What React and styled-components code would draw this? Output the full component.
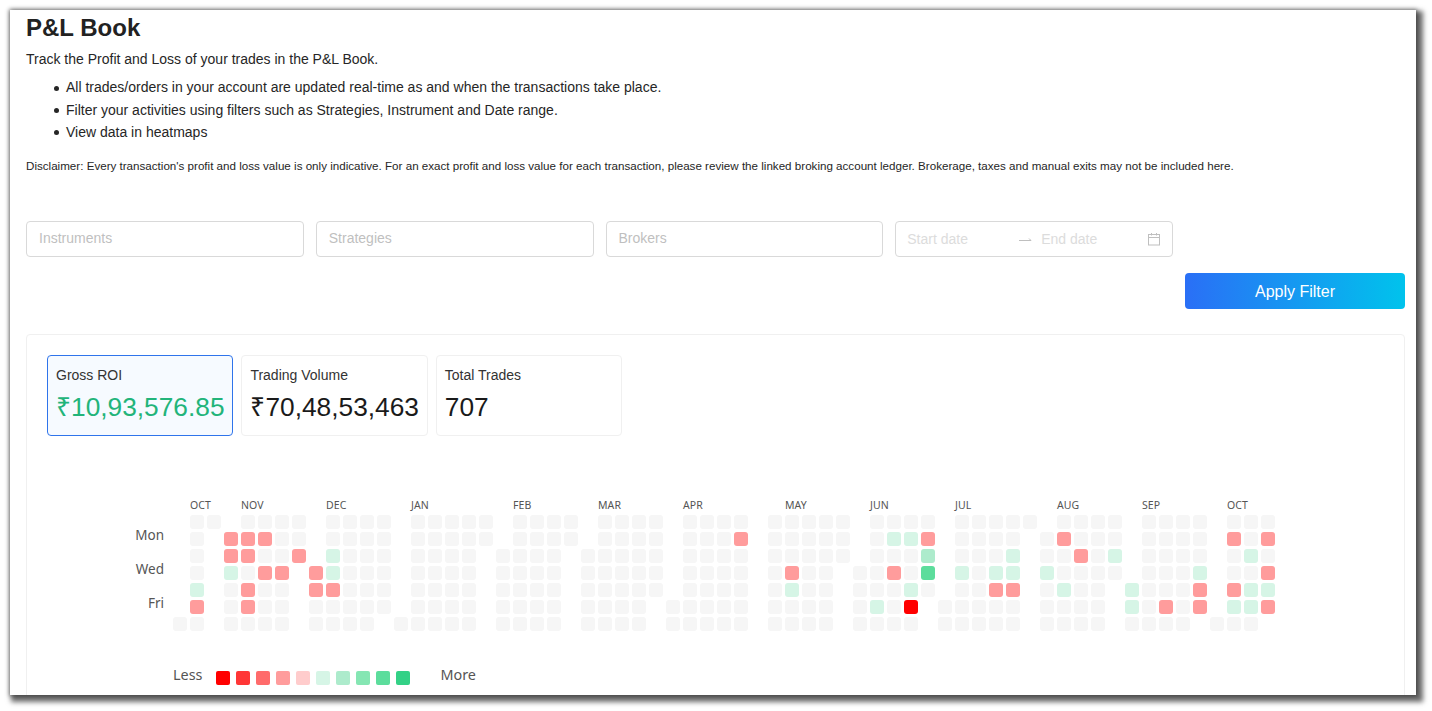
import React from "react";
import styled, { createGlobalStyle } from "styled-components";

const GlobalStyle = createGlobalStyle`
  html, body { margin: 0; padding: 0; background: #fff; height: 711px; overflow: hidden; }
  body { font-family: "Liberation Sans", Arial, sans-serif; }
  * { box-sizing: border-box; }
`;

const Stage = styled.div`
  height: 711px;
  padding: 10px 16px 16px 10px;
`;
const Frame = styled.main`
  height: 685px;
  background: #fff;
  padding: 0 11px 0 16px;
  overflow: hidden;
  box-shadow: 4px 4px 5px 3px rgba(0, 0, 0, 0.58), 0 0 4px 1px rgba(0, 0, 0, 0.4);
`;
const Title = styled.h1`
  margin: 0;
  font-size: 24px;
  line-height: 36px;
  font-weight: 700;
  color: #222;
`;
const Intro = styled.p`
  margin: 2px 0 0;
  font-size: 14px;
  line-height: 22px;
  color: #262626;
`;
const Bullets = styled.ul`
  margin: 6.3px 0 0;
  padding-left: 28px;
  list-style: none;
  font-size: 14px;
  line-height: 22.4px;
  color: #262626;
`;
const Bullet = styled.li`
  display: flex;
  align-items: center;
  &::before {
    content: "";
    flex: 0 0 5px;
    height: 5px;
    margin: 1px 7px 0 0;
    border-radius: 50%;
    background: #262626;
  }
`;
const Disclaimer = styled.p`
  margin: 13.7px 0 0;
  font-size: 11.62px;
  line-height: 18px;
  color: #262626;
`;
const Filters = styled.div`
  display: grid;
  grid-template-columns: repeat(4, 277.75px);
  column-gap: 12px;
  margin-top: 46px;
`;
const Field = styled.div`
  height: 36px;
  border: 1px solid #d9d9d9;
  border-radius: 4px;
  padding: 0 12px 2px;
  display: flex;
  align-items: center;
  font-size: 14px;
  color: #bfbfbf;
`;
const DateField = styled(Field)`
  padding: 0 11px 0 11px;
  color: #dcdcdc;
`;
const DateText = styled.span`
  flex: 0 0 ${(p) => p.$w}px;
`;
const IconSlot = styled.span`
  display: flex;
  color: ${(p) => p.$c || "#bfbfbf"};
  margin-left: ${(p) => p.$ml || 0}px;
  margin-right: ${(p) => p.$mr || 0}px;
`;
const Actions = styled.div`
  display: flex;
  justify-content: flex-end;
  margin-top: 16px;
`;
const ApplyButton = styled.button`
  width: 220px;
  height: 36px;
  border: 0;
  border-radius: 4px;
  padding: 2px 0 0;
  color: #fff;
  font: 16px "Liberation Sans", Arial, sans-serif;
  background: linear-gradient(90deg, #2a6ff6 0%, #00c3ec 100%);
`;
const Panel = styled.section`
  margin-top: 25px;
  height: 400px;
  border: 1px solid #f0f0f0;
  border-radius: 4px;
  padding: 20px;
`;
const Cards = styled.div`
  display: flex;
  gap: 8px;
`;
const Card = styled.div`
  width: 186.4px;
  height: 81px;
  padding: 10px 8px 0;
  border-radius: 4px;
  border: 1px solid ${(p) => (p.$active ? "#2f74eb" : "#f0f0f0")};
  background: ${(p) => (p.$active ? "#f6faff" : "#fff")};
  white-space: nowrap;
`;
const CardLabel = styled.div`
  font-size: 14px;
  line-height: 18px;
  color: #333;
`;
const CardValue = styled.div`
  margin-top: 5px;
  font-size: 26.3px;
  line-height: 36px;
  color: ${(p) => (p.$green ? "#22b47a" : "#1a1a1a")};
`;
const Heatmap = styled.div`
  margin: 59px 0 0 62px;
  display: grid;
  grid-template-columns: 64px auto;
  column-gap: 0;
  font-family: "Noto Sans", sans-serif;
  color: #555;
`;
const Months = styled.div`
  grid-column: 2;
  display: grid;
  grid-template-columns: repeat(65, 14px);
  column-gap: 3px;
  height: 20px;
  align-items: center;
  font-size: 10.5px;
  white-space: nowrap;
`;
const Month = styled.span`
  grid-column: ${(p) => p.$col + 1};
  grid-row: 1;
  width: 14px;
  letter-spacing: 0.1px;
`;
const Days = styled.div`
  display: grid;
  grid-template-rows: repeat(7, 14px);
  row-gap: 3px;
  justify-items: end;
  align-items: center;
  margin-top: -4px;
  padding-right: 9px;
  font-size: 13.5px;
`;
const Day = styled.span`
  grid-row: ${(p) => p.$row + 1};
`;
const Weeks = styled.div`
  display: grid;
  grid-auto-flow: column;
  grid-template-rows: repeat(7, 14px);
  grid-auto-columns: 14px;
  gap: 3px;
`;
const Cell = styled.i`
  display: block;
  border-radius: 3px;
  background: ${(p) => p.$bg};
`;
const Legend = styled.div`
  margin: 37px 0 0 126px;
  display: flex;
  align-items: center;
  font-family: "Noto Sans", sans-serif;
  font-size: 14.4px;
  color: #555;
  height: 14px;
`;
const LegendLabel = styled.span`
  margin-top: -2px;
`;
const LegendSwatches = styled.div`
  display: flex;
  gap: 6px;
  margin: 6px 30px 0 14px;
`;
const Swatch = styled.i`
  display: block;
  width: 14px;
  height: 14px;
  border-radius: 2px;
  background: ${(p) => p.$bg};
`;

const palette = {
  ".": "#f6f6f6",
  g: "#d6f5e6",
  r: "#ff9c9c",
  h: "#adebcc",
  m: "#5cdd9c",
  R: "#ff0000",
  " ": "transparent",
};
const scale = ["#ff0000", "#ff3636", "#ff6b6b", "#ff9c9c", "#ffcccc", "#d6f5e6", "#adebcc", "#85e6b3", "#5cdd9c", "#33d186"];

const months = [
  ["OCT", 1], ["NOV", 4], ["DEC", 9], ["JAN", 14], ["FEB", 20], ["MAR", 25], ["APR", 30],
  ["MAY", 36], ["JUN", 41], ["JUL", 46], ["AUG", 52], ["SEP", 57], ["OCT", 62],
];

const A = ".......";
const columns = [
  "      .", "....gr.", ".      ", " rrg...", ".rr.rr.", ".r.r...", "...r...", "..r    ",
  "   rr..", "..ggr..", A, A, "...... ", "      .",
  A, A, A, A, "..     ", "  .....", A, A, A, "..     ",
  "  .....", A, A, A, ".....  ", "     ..", A, A, A, ".r.....",
  "       ", A, "...rg..", A, A, "...    ",
  "   ....", ".....g.", ".g.r...", ".g..gR.", ".rhm.  ", "     ..",
  "...g...", A, "...gr..", "..ggr..", ".      ",
  " ..g...", ".r..g..", "..r....", A, "..g.   ", "    gg.",
  A, ".....r.", A, "...grr ", "      .", ".r..rg.", "..g.gg.", ".r.rgr ",
];

const CalendarIcon = () => (
  <svg width="14" height="14" viewBox="0 0 14 14" fill="none" stroke="currentColor" strokeWidth="1">
    <rect x="1.5" y="2.5" width="11" height="10.5" />
    <path d="M1.5 5.5h11M4.5 1v2.5M9.5 1v2.5" />
  </svg>
);
const SwapRightIcon = () => (
  <svg width="14" height="8" viewBox="0 0 14 8" fill="none" stroke="currentColor" strokeWidth="1">
    <path d="M1 5.5h12L11 3.5" />
  </svg>
);

export default function App() {
  return (
    <>
      <GlobalStyle />
      <Stage>
        <Frame>
          <Title>P&amp;L Book</Title>
          <Intro>Track the Profit and Loss of your trades in the P&amp;L Book.</Intro>
          <Bullets>
            <Bullet>All trades/orders in your account are updated real-time as and when the transactions take place.</Bullet>
            <Bullet>Filter your activities using filters such as Strategies, Instrument and Date range.</Bullet>
            <Bullet>View data in heatmaps</Bullet>
          </Bullets>
          <Disclaimer>
            Disclaimer: Every transaction's profit and loss value is only indicative. For an exact profit and loss value for each transaction, please review the linked broking account ledger. Brokerage, taxes and manual exits may not be included here.
          </Disclaimer>
          <Filters>
            <Field>Instruments</Field>
            <Field>Strategies</Field>
            <Field>Brokers</Field>
            <DateField>
              <DateText $w={110}>Start date</DateText>
              <IconSlot $ml={1} $mr={9}><SwapRightIcon /></IconSlot>
              <DateText $w={106}>End date</DateText>
              <IconSlot><CalendarIcon /></IconSlot>
            </DateField>
          </Filters>
          <Actions>
            <ApplyButton>Apply Filter</ApplyButton>
          </Actions>
          <Panel>
            <Cards>
              <Card $active>
                <CardLabel>Gross ROI</CardLabel>
                <CardValue $green>₹10,93,576.85</CardValue>
              </Card>
              <Card>
                <CardLabel>Trading Volume</CardLabel>
                <CardValue>₹70,48,53,463</CardValue>
              </Card>
              <Card>
                <CardLabel>Total Trades</CardLabel>
                <CardValue>707</CardValue>
              </Card>
            </Cards>
            <Heatmap>
              <Months>
                {months.map(([label, col], i) => (
                  <Month key={i} $col={col}>{label}</Month>
                ))}
              </Months>
              <Days>
                <Day $row={1}>Mon</Day>
                <Day $row={3}>Wed</Day>
                <Day $row={5}>Fri</Day>
              </Days>
              <Weeks>
                {columns.flatMap((col, c) =>
                  col.split("").map((v, r) => <Cell key={`${c}-${r}`} $bg={palette[v]} />)
                )}
              </Weeks>
            </Heatmap>
            <Legend>
              <LegendLabel>Less</LegendLabel>
              <LegendSwatches>
                {scale.map((bg) => (
                  <Swatch key={bg} $bg={bg} />
                ))}
              </LegendSwatches>
              <LegendLabel>More</LegendLabel>
            </Legend>
          </Panel>
        </Frame>
      </Stage>
    </>
  );
}
